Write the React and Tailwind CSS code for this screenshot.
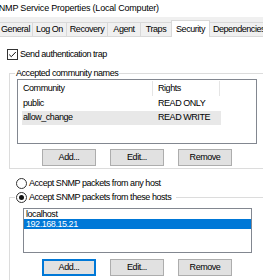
import { useState } from 'react';

const tabs = [
  { label: 'General', w: 'w-[35px] -ml-[2px]' },
  { label: 'Log On', w: 'w-[35px] -ml-px' },
  { label: 'Recovery', w: 'w-[42px] -ml-px' },
  { label: 'Agent', w: 'w-[34px] -ml-px' },
  { label: 'Traps', w: 'w-[32px] -ml-px' },
  { label: 'Security', w: 'w-[39px] -ml-px', active: true },
  { label: 'Dependencies', w: 'w-[60px] -ml-px' },
];

const communities = [
  { name: 'public', rights: 'READ ONLY' },
  { name: 'allow_change', rights: 'READ WRITE', selected: true },
];

function Button({ children, primary }) {
  return (
    <button
      type="button"
      className={`flex h-[17px] w-[54px] items-center justify-center border bg-[#e1e1e1] leading-none ${
        primary
          ? 'border-[#0078d7] shadow-[inset_0_0_0_1px_#0078d7]'
          : 'border-[#adadad]'
      }`}
    >
      {children}
    </button>
  );
}

function ButtonRow({ primary }) {
  return (
    <div className="ml-[25px] flex gap-[14px]">
      <Button primary={primary}>Add...</Button>
      <Button>Edit...</Button>
      <Button>Remove</Button>
    </div>
  );
}

function Radio({ checked }) {
  return (
    <span className="flex h-[11px] w-[11px] shrink-0 items-center justify-center rounded-full border border-[#333]">
      {checked && <span className="h-[5px] w-[5px] rounded-full bg-[#111]" />}
    </span>
  );
}

export default function App() {
  const [hostIdx] = useState(1);

  return (
    <div className="h-[280px] w-[263px] overflow-hidden bg-[#f0f0f0] font-['Liberation_Sans',Arial,sans-serif] text-[9px] tracking-[-0.45px] text-black">
      {/* title bar */}
      <div className="h-[17px] bg-white pl-0 leading-[17px] tracking-[-0.2px]">
        <span className="-ml-[7px] block whitespace-nowrap">SNMP Service Properties (Local Computer)</span>
      </div>

      {/* tabs */}
      <div className="flex h-[19px] items-end">
        {tabs.map(t =>
          t.active ? (
            <div
              key={t.label}
              className={`relative z-10 -mb-px flex h-[17px] shrink-0 justify-center border border-b-0 border-[#d9d9d9] bg-white pt-[3px] leading-[10px] ${t.w}`}
            >
              {t.label}
            </div>
          ) : (
            <div
              key={t.label}
              className={`flex h-[14px] shrink-0 items-center justify-center whitespace-nowrap border border-b-0 border-[#d9d9d9] bg-[#f0f0f0] leading-none ${t.w}`}
            >
              {t.label}
            </div>
          )
        )}
      </div>

      {/* tab page */}
      <div className="h-[300px] border-t border-[#d9d9d9] bg-white">
        <div className="mt-[12px] ml-[7px] flex h-[11px] items-center gap-[2px]">
          <svg width="11" height="11" viewBox="0 0 11 11" className="shrink-0">
            <rect x="0.5" y="0.5" width="10" height="10" fill="white" stroke="#333" />
            <polyline points="2.2,5.6 4.3,7.7 8.8,3" fill="none" stroke="#111" strokeWidth="1" />
          </svg>
          <span className="leading-none">Send authentication trap</span>
        </div>

        {/* community group */}
        <fieldset className="mt-[8px] ml-[9px] w-[270px] border border-[#dcdcdc] pb-[2px] pl-[7px]">
          <legend className="-ml-[2px] px-[1px] leading-[11px]">Accepted community names</legend>
          <div className="h-[65px] w-[240px] border border-[#828790] bg-white">
            <div className="flex h-[17px] items-center">
              <div className="w-[134px] pl-[5px]">Community</div>
              <div className="h-[15px] w-px bg-[#e5e5e5]" />
              <div className="w-[66px] pl-[5px]">Rights</div>
              <div className="h-[15px] w-px bg-[#e5e5e5]" />
            </div>
            {communities.map(c => (
              <div
                key={c.name}
                className={`ml-[4px] flex h-[14px] w-[199px] items-center ${c.selected ? 'bg-[#e8e8e8]' : ''}`}
              >
                <div className="w-[136px] pl-[1px]">{c.name}</div>
                <div>{c.rights}</div>
              </div>
            ))}
          </div>
          <div className="mt-[5px]">
            <ButtonRow />
          </div>
        </fieldset>

        <div className="mt-[9px] ml-[16px] flex h-[11px] items-center gap-[2px]">
          <Radio />
          <span className="leading-none">Accept SNMP packets from any host</span>
        </div>

        {/* hosts group */}
        <fieldset className="mt-[3px] ml-[9px] h-[120px] w-[270px] border border-[#dcdcdc] pl-[7px]">
          <legend className="-ml-[2px] flex items-center gap-[2px] pr-[5px] pl-[1px] leading-[11px]">
            <Radio checked />
            <span>Accept SNMP packets from these hosts</span>
          </legend>
          <div className="mt-[5px] ml-[6px] h-[45px] w-[229px] border border-[#828790] bg-white">
            {['localhost', '192.168.15.21'].map((h, i) => (
              <div
                key={h}
                className={`flex h-[10px] items-center pl-[2px] leading-none ${
                  i === hostIdx ? 'bg-[#0078d7] text-white' : ''
                }`}
              >
                {h}
              </div>
            ))}
          </div>
          <div className="mt-[6px]">
            <ButtonRow primary />
          </div>
        </fieldset>
      </div>
    </div>
  );
}
